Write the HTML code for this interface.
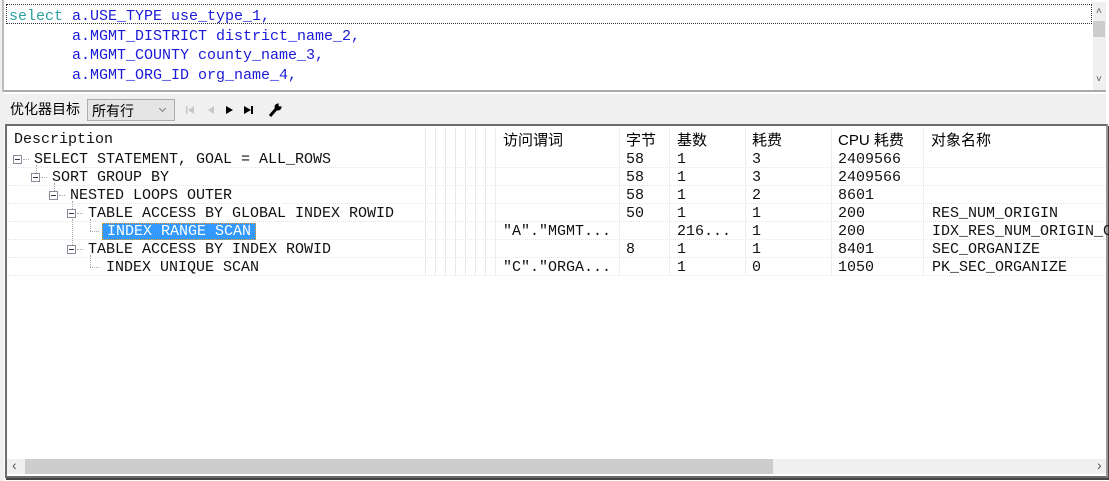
<!DOCTYPE html>
<html><head><meta charset="utf-8"><style>
*{margin:0;padding:0;box-sizing:border-box}
body{width:1109px;height:481px;background:#fff;position:relative;overflow:hidden;font-family:"Liberation Mono","Noto Sans CJK SC",monospace}
.abs{position:absolute}
.mono{font-family:"Liberation Mono","Noto Sans CJK SC",monospace;font-size:15px;white-space:pre}
.cjk{font-family:"Liberation Sans","Noto Sans CJK SC",sans-serif}
.kw{color:#2aa0a0}
.bl{color:#1a1ad8}
.row{position:absolute;left:8px;width:1098px;height:18px;border-bottom:1px dotted #e6e6e6}
.c{position:absolute;top:1px;line-height:18px;font-size:15px;white-space:pre;color:#111}
.box{position:absolute;width:9px;height:9px;border:1px solid #8a8a9a;background:#fff}
.box:after{content:"";position:absolute;left:1px;top:3px;width:5px;height:1px;background:#334}
.vl{position:absolute;border-left:1px dotted #aaa}
.hl{position:absolute;border-top:1px dotted #aaa;height:0}
</style></head><body>
<div class="abs" style="left:0;top:0;width:1109px;height:481px;border-left:4px solid #f0f0f0"></div>
<div class="abs" style="left:2px;top:0;width:2px;height:92px;background:#bbb"></div>
<div class="abs" style="left:4px;top:0;width:1102px;height:92px;border-bottom:2px solid #aaa;background:#fff"></div>
<div class="abs" style="left:6px;top:4px;width:1086px;height:20px;border:1px dotted #333;background:#fff"></div>
<div class="abs mono" style="left:9px;top:7px;line-height:19.5px"><span class="kw">select</span> <span class="bl">a.USE_TYPE use_type_1,</span>
<span class="bl">       a.MGMT_DISTRICT district_name_2,</span>
<span class="bl">       a.MGMT_COUNTY county_name_3,</span>
<span class="bl">       a.MGMT_ORG_ID org_name_4,</span></div>
<div class="abs" style="left:1093px;top:2px;width:13px;height:88px;background:#f0f0f0"></div>
<div class="abs" style="left:1093px;top:21px;width:12px;height:16px;background:#cdcdcd"></div>
<div class="abs" style="left:1096px;top:6px;font-size:10px;color:#555;font-family:'Liberation Sans'">˄</div>
<div class="abs" style="left:1096px;top:74px;font-size:10px;color:#555;font-family:'Liberation Sans'">˅</div>
<div class="abs" style="left:4px;top:94px;width:1102px;height:30px;background:#f0f0f0"></div>
<div class="abs cjk" style="left:10px;top:99px;font-size:14px;color:#000">优化器目标</div>
<div class="abs cjk" style="left:87px;top:99px;width:88px;height:22px;border:1px solid #adadad;background:#e5e5e5;font-size:14px;padding:1px 0 0 4px">所有行</div>
<div class="abs" style="left:160px;top:106px;width:5px;height:5px;border-right:1px solid #777;border-bottom:1px solid #777;transform:rotate(45deg)"></div>
<svg class="abs" style="left:184px;top:102px" width="100" height="16">
<rect x="2" y="4" width="1.5" height="8" fill="#c8c8c8"/><path d="M10 4 L4 8 L10 12Z" fill="#c8c8c8"/>
<path d="M30 4 L24 8 L30 12Z" fill="#c8c8c8"/>
<path d="M42 4 L49 8 L42 12Z" fill="#000"/>
<path d="M60 4 L67 8 L60 12Z" fill="#000"/><rect x="67" y="4" width="2" height="8" fill="#000"/>
<path d="M86 14 L93 6" stroke="#000" stroke-width="3"/><circle cx="94" cy="5" r="3.5" fill="#000"/><circle cx="96" cy="3" r="1.5" fill="#f0f0f0"/>
</svg>
<div class="abs" style="left:5px;top:124px;width:1103px;height:354px;border:2px solid #6d6d6d;border-right-color:#999;box-shadow:1px 2px 0 #444;background:#fff"></div>
<div class="abs c" style="left:14px;top:131px">Description</div>
<div class="abs cjk" style="left:503px;top:129px;font-size:15px">访问谓词</div>
<div class="abs cjk" style="left:626px;top:129px;font-size:15px">字节</div>
<div class="abs cjk" style="left:677px;top:129px;font-size:15px">基数</div>
<div class="abs cjk" style="left:752px;top:129px;font-size:15px">耗费</div>
<div class="abs cjk" style="left:838px;top:129px;font-size:15px">CPU 耗费</div>
<div class="abs cjk" style="left:931px;top:129px;font-size:15px">对象名称</div>
<div class="abs" style="left:425px;top:128px;width:70px;height:148px;background:repeating-linear-gradient(90deg,#e8e8e8 0 1px,transparent 1px 10px)"></div>
<div class="abs" style="left:495px;top:128px;width:1px;height:148px;background:#eee"></div>
<div class="abs" style="left:619px;top:128px;width:1px;height:148px;background:#eee"></div>
<div class="abs" style="left:669px;top:128px;width:1px;height:148px;background:#eee"></div>
<div class="abs" style="left:745px;top:128px;width:1px;height:148px;background:#eee"></div>
<div class="abs" style="left:831px;top:128px;width:1px;height:148px;background:#eee"></div>
<div class="abs" style="left:923px;top:128px;width:1px;height:148px;background:#eee"></div>
<div class="row" style="top:150px"><span class="c" style="left:26px">SELECT STATEMENT, GOAL = ALL_ROWS</span><span class="c" style="left:618px">58</span><span class="c" style="left:669px">1</span><span class="c" style="left:744px">3</span><span class="c" style="left:830px">2409566</span></div>
<div class="row" style="top:168px"><span class="c" style="left:44px">SORT GROUP BY</span><span class="c" style="left:618px">58</span><span class="c" style="left:669px">1</span><span class="c" style="left:744px">3</span><span class="c" style="left:830px">2409566</span></div>
<div class="row" style="top:186px"><span class="c" style="left:62px">NESTED LOOPS OUTER</span><span class="c" style="left:618px">58</span><span class="c" style="left:669px">1</span><span class="c" style="left:744px">2</span><span class="c" style="left:830px">8601</span></div>
<div class="row" style="top:204px"><span class="c" style="left:80px">TABLE ACCESS BY GLOBAL INDEX ROWID</span><span class="c" style="left:618px">50</span><span class="c" style="left:669px">1</span><span class="c" style="left:744px">1</span><span class="c" style="left:830px">200</span><span class="c" style="left:924px">RES_NUM_ORIGIN</span></div>
<div class="row" style="top:222px"><span class="c" style="left:94px;top:1px;height:17px;line-height:16px;background:#3399ff;color:#fff;padding:0 4px;border:1px dotted #f0a020">INDEX RANGE SCAN</span><span class="c" style="left:495px">"A"."MGMT...</span><span class="c" style="left:669px">216...</span><span class="c" style="left:744px">1</span><span class="c" style="left:830px">200</span><span class="c" style="left:924px">IDX_RES_NUM_ORIGIN_C</span></div>
<div class="row" style="top:240px"><span class="c" style="left:80px">TABLE ACCESS BY INDEX ROWID</span><span class="c" style="left:618px">8</span><span class="c" style="left:669px">1</span><span class="c" style="left:744px">1</span><span class="c" style="left:830px">8401</span><span class="c" style="left:924px">SEC_ORGANIZE</span></div>
<div class="row" style="top:258px"><span class="c" style="left:98px">INDEX UNIQUE SCAN</span><span class="c" style="left:495px">"C"."ORGA...</span><span class="c" style="left:669px">1</span><span class="c" style="left:744px">0</span><span class="c" style="left:830px">1050</span><span class="c" style="left:924px">PK_SEC_ORGANIZE</span></div>
<div class="box" style="left:13px;top:155px"></div><div class="hl" style="left:23px;top:159px;width:6px"></div>
<div class="vl" style="left:36px;top:165px;height:8px"></div>
<div class="box" style="left:31px;top:173px"></div><div class="hl" style="left:41px;top:177px;width:6px"></div>
<div class="vl" style="left:54px;top:183px;height:8px"></div>
<div class="box" style="left:49px;top:191px"></div><div class="hl" style="left:59px;top:195px;width:6px"></div>
<div class="vl" style="left:72px;top:201px;height:8px"></div>
<div class="box" style="left:67px;top:209px"></div><div class="hl" style="left:77px;top:213px;width:6px"></div>
<div class="vl" style="left:72px;top:219px;height:26px"></div>
<div class="box" style="left:67px;top:245px"></div><div class="hl" style="left:77px;top:249px;width:6px"></div>
<div class="vl" style="left:90px;top:219px;height:12px"></div><div class="hl" style="left:90px;top:231px;width:9px"></div>
<div class="vl" style="left:90px;top:255px;height:12px"></div><div class="hl" style="left:90px;top:267px;width:9px"></div>
<div class="abs" style="left:7px;top:459px;width:1099px;height:15px;background:#f0f0f0"></div>
<div class="abs" style="left:25px;top:459px;width:748px;height:15px;background:#cdcdcd"></div>
<div class="abs" style="left:12px;top:457px;font-size:14px;color:#555;font-family:'Liberation Sans'">‹</div>
<div class="abs" style="left:1097px;top:457px;font-size:14px;color:#555;font-family:'Liberation Sans'">›</div>
</body></html>
